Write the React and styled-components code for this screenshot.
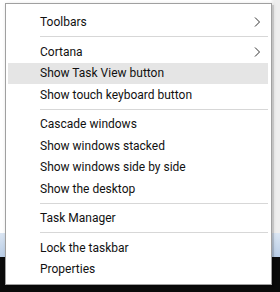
import React from 'react'
import styled, { createGlobalStyle } from 'styled-components'

const GlobalStyle = createGlobalStyle`
  html, body {
    margin: 0;
    padding: 0;
    background: #ffffff;
  }
  body {
    font-family: Roboto, "Noto Sans", "Liberation Sans", sans-serif;
  }
`

const Desktop = styled.div`
  position: relative;
  width: 280px;
  height: 292px;
  display: flex;
  flex-direction: column;
  overflow: hidden;
`

const Wallpaper = styled.div`
  flex: 1 1 auto;
  background: linear-gradient(90deg, #ffffff 0 270px, #eeeeee 274px);
`

const TaskbarEdge = styled.div`
  flex: 0 0 24px;
  background: linear-gradient(180deg, #dbe6f3, #b9cde6);
`

const Taskbar = styled.div`
  flex: 0 0 35px;
  background: #0b0b0b;
`

const Menu = styled.div`
  position: absolute;
  left: 5px;
  top: 3px;
  width: 267px;
  box-sizing: border-box;
  padding: 7.5px 3px 4px 2px;
  background: #ffffff;
  border: 1px solid #a0a0a0;
  box-shadow: 2px 2px 0 rgba(0, 0, 0, 0.12), 1px 1px 4px rgba(0, 0, 0, 0.15);
  display: flex;
  flex-direction: column;
`

const Item = styled.div`
  height: 21.5px;
  display: flex;
  align-items: center;
  padding-left: 32px;
  font-size: 12px;
  color: #111111;
  white-space: nowrap;
  background: ${p => (p.$active ? '#e5e5e5' : 'transparent')};
`

const Separator = styled.div`
  height: 1px;
  margin: 3px 0 4px 32px;
  background: #d7d7d7;
`

const Chevron = styled.svg`
  margin-left: auto;
  margin-right: 7px;
  flex: 0 0 auto;
`

const Arrow = () => (
  <Chevron width="7" height="10" viewBox="0 0 7 10">
    <polyline points="1,0.5 5.5,5 1,9.5" fill="none" stroke="#333333" strokeWidth="1" />
  </Chevron>
)

const groups = [
  [
    { label: 'Toolbars', sub: true }
  ],
  [
    { label: 'Cortana', sub: true },
    { label: 'Show Task View button', active: true },
    { label: 'Show touch keyboard button' }
  ],
  [
    { label: 'Cascade windows' },
    { label: 'Show windows stacked' },
    { label: 'Show windows side by side' },
    { label: 'Show the desktop' }
  ],
  [
    { label: 'Task Manager' }
  ],
  [
    { label: 'Lock the taskbar' },
    { label: 'Properties' }
  ]
]

export default function App () {
  return (
    <>
      <GlobalStyle />
      <Desktop>
        <Wallpaper />
        <TaskbarEdge />
        <Taskbar />
        <Menu>
          {groups.map((group, gi) => (
            <React.Fragment key={gi}>
              {gi > 0 && <Separator />}
              {group.map(item => (
                <Item key={item.label} $active={item.active}>
                  {item.label}
                  {item.sub && <Arrow />}
                </Item>
              ))}
            </React.Fragment>
          ))}
        </Menu>
      </Desktop>
    </>
  )
}
